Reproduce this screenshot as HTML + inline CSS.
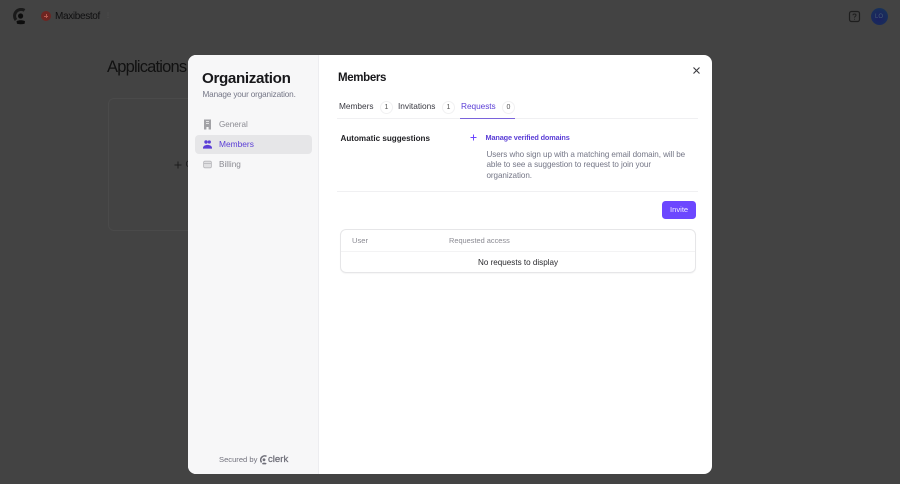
<!DOCTYPE html>
<html>
<head>
<meta charset="utf-8">
<style>
*{box-sizing:border-box}
html,body{margin:0;padding:0}
body{width:900px;height:484px;overflow:hidden;background:#434343;font-family:"Liberation Sans",sans-serif;position:relative}
.t{position:absolute;white-space:nowrap;line-height:1}
.modal{position:absolute;left:188px;top:55px;width:524px;height:419px;background:#fff;border-radius:8px;overflow:hidden}
.side{position:absolute;left:188px;top:55px;width:131px;height:419px;background:#f7f7f8;border-right:1px solid #ededf0;border-radius:8px 0 0 8px}
.line{position:absolute;height:1px;background:#f0f0f2}
.pill{position:absolute;width:13px;height:13px;border-radius:7px;background:#fff;border:1px solid #f1f1f2;font-size:7px;line-height:11px;text-align:center;color:#555}
svg{position:absolute;display:block}
</style>
</head>
<body>
<!-- background app -->
<svg style="left:13px;top:8px" width="14" height="17" viewBox="0 0 14 17">
<path d="M11.5 2.4A6.5 6.5 0 0 0 3 12" fill="none" stroke="#1a1a1a" stroke-width="3"/>
<circle cx="7.6" cy="8" r="2.6" fill="#0d0d0d"/>
<path d="M3.5 13.2C6 12 9.5 12 12 13.2L11.6 15.8C9 16.4 6.5 16.4 4 15.8Z" fill="#0d0d0d"/>
</svg>
<div style="position:absolute;left:41px;top:11px;width:10px;height:10px;border-radius:50%;background:#6e2521"></div>
<div class="t" style="left:44px;top:15.5px;width:4px;height:1.2px;background:#b65a50"></div>
<div class="t" style="left:44.4px;top:14px;width:1.2px;height:4px;margin-left:1.3px;background:#b65a50"></div>
<div class="t" style="left:55px;top:11.5px;font-size:10px;letter-spacing:-.34px;color:#0f0f10">Maxibestof</div>
<div class="t" style="left:105px;top:13px;font-size:6px;color:#555">⋮</div>
<div class="t" style="left:107px;top:58.5px;font-size:16.5px;letter-spacing:-.8px;color:#111">Applications</div>
<div style="position:absolute;left:108px;top:98px;width:120px;height:133px;border:1px solid #4a4a4a;border-radius:6px"></div>
<svg style="left:174px;top:161px" width="8" height="8" viewBox="0 0 8 8"><path d="M4 .5V7.5M.5 4H7.5" stroke="#1c1c1c" stroke-width="1"/></svg>
<div class="t" style="left:185.5px;top:160px;font-size:9px;color:#1c1c1c">C</div>
<svg style="left:848px;top:10px" width="13" height="13" viewBox="0 0 13 13">
<rect x="1.5" y="1.5" width="10" height="10" rx="2" fill="none" stroke="#1e1e1e" stroke-width="1.2"/>
<path d="M5 5.2C5 3.6 8 3.6 8 5.2 8 6.4 6.5 6.3 6.5 7.6M6.5 8.8V9.6" fill="none" stroke="#1e1e1e" stroke-width="1"/>
</svg>
<div style="position:absolute;left:871px;top:8px;width:17px;height:17px;border-radius:50%;background:radial-gradient(circle at 45% 60%,#1a2060,#192e5a 65%,#184450)"></div>
<div class="t" style="left:875px;top:13.5px;font-size:6px;color:#465f74">LO</div>

<!-- modal -->
<div class="modal"></div>
<div class="side"></div>

<div class="t" style="left:202px;top:70.5px;font-size:15.2px;font-weight:bold;letter-spacing:-.36px;color:#17171a">Organization</div>
<div class="t" style="left:202.5px;top:90.5px;font-size:8.2px;letter-spacing:-.15px;color:#747686">Manage your organization.</div>

<svg style="left:203px;top:119px" width="9" height="11" viewBox="0 0 9 11"><path d="M1 .5H8V10.5H5.6V8H3.4V10.5H1Z" fill="#a2a2a6"/><path d="M3 2.5H6M3 4.5H6" stroke="#f7f7f8" stroke-width=".8"/></svg>
<div class="t" style="left:219px;top:120.6px;font-size:8.1px;color:#8b8b92">General</div>

<div style="position:absolute;left:195px;top:135px;width:117px;height:19px;border-radius:4px;background:#e6e6e8"></div>
<svg style="left:203px;top:140px" width="9" height="9" viewBox="0 0 9 9"><circle cx="3" cy="2" r="1.7" fill="#5b3ed6"/><circle cx="6.3" cy="2" r="1.6" fill="#5b3ed6"/><path d="M0 8C0 3.8 9 3.8 9 8V8.6H0Z" fill="#5b3ed6"/></svg>
<div class="t" style="left:219px;top:140px;font-size:8.4px;color:#5b3ed6">Members</div>

<svg style="left:203px;top:160px" width="9" height="9" viewBox="0 0 9 9"><rect x=".6" y="1.2" width="7.8" height="6.6" rx="1.4" fill="#e0e0e2" stroke="#b6b6ba" stroke-width=".8"/><path d="M.6 3.4H8.4" stroke="#b6b6ba" stroke-width=".8"/></svg>
<div class="t" style="left:219px;top:161px;font-size:8.2px;color:#8b8b92">Billing</div>

<div class="t" style="left:219px;top:456px;font-size:7.6px;color:#73737e">Secured by</div>
<svg style="left:260px;top:454.5px" width="8" height="10" viewBox="0 0 8 10"><path d="M6.5 1.3A4 4 0 0 0 1.6 7.4" fill="none" stroke="#6e6e78" stroke-width="1.5"/><circle cx="4" cy="4.8" r="1.4" fill="#6e6e78"/><path d="M2 8.2C3.4 7.5 5 7.5 6.6 8.2L6 9.4H2.6Z" fill="#6e6e78"/></svg>
<div class="t" style="left:268px;top:455px;font-size:9.6px;-webkit-text-stroke:.25px #6e6e78;color:#6e6e78">clerk</div>

<!-- content -->
<div class="t" style="left:338px;top:73px;font-size:11.5px;font-weight:bold;letter-spacing:-.35px;color:#17171a">Members</div>
<svg style="left:693px;top:67px" width="7" height="7" viewBox="0 0 7 7"><path d="M.5.5L6.5 6.5M6.5.5L.5 6.5" stroke="#3a3a3e" stroke-width="1.1"/></svg>

<div class="t" style="left:339px;top:102.4px;font-size:8.3px;color:#3a3a42">Members</div>
<div class="pill" style="left:380px;top:101px">1</div>
<div class="t" style="left:398px;top:102.4px;font-size:8.3px;color:#3a3a42">Invitations</div>
<div class="pill" style="left:442px;top:101px">1</div>
<div class="t" style="left:461px;top:102.4px;font-size:8.3px;letter-spacing:-.05px;color:#5b3ed6">Requests</div>
<div class="pill" style="left:502px;top:101px">0</div>
<div class="line" style="left:337px;top:118px;width:361px"></div>
<div style="position:absolute;left:460px;top:118px;width:55px;height:1px;background:#7a63db"></div>

<div class="t" style="left:340.5px;top:134.6px;font-size:8.1px;font-weight:bold;color:#222226">Automatic suggestions</div>
<svg style="left:470px;top:134px" width="7" height="7" viewBox="0 0 7 7"><path d="M3.5.5V6.5M.5 3.5H6.5" stroke="#6c47ff" stroke-width="1"/></svg>
<div class="t" style="left:485.5px;top:134px;font-size:7.3px;font-weight:bold;letter-spacing:-.13px;color:#5b3ed6">Manage verified domains</div>
<div class="t" style="left:486.5px;top:149.5px;font-size:8.1px;letter-spacing:-.07px;line-height:10.9px;color:#747686">Users who sign up with a matching email domain, will be<br>able to see a suggestion to request to join your<br>organization.</div>
<div class="line" style="left:337px;top:191px;width:361px"></div>

<div style="position:absolute;left:662px;top:201px;width:34px;height:18px;border-radius:3.5px;background:#6c47ff"></div>
<div class="t" style="left:670px;top:206px;font-size:7.6px;color:#f0ecff">Invite</div>

<div style="position:absolute;left:340px;top:229px;width:356px;height:44px;border:1px solid #e6e6e8;border-radius:6px;box-shadow:0 1px 1px rgba(0,0,0,.04)"></div>
<div class="line" style="left:341px;top:251px;width:354px;background:#f3f3f4"></div>
<div class="t" style="left:352px;top:236.6px;font-size:7.6px;color:#8a8a92">User</div>
<div class="t" style="left:449px;top:236.6px;font-size:7.4px;color:#8a8a92">Requested access</div>
<div class="t" style="left:478px;top:258.6px;font-size:8.1px;color:#2a2a2e">No requests to display</div>
</body>
</html>
